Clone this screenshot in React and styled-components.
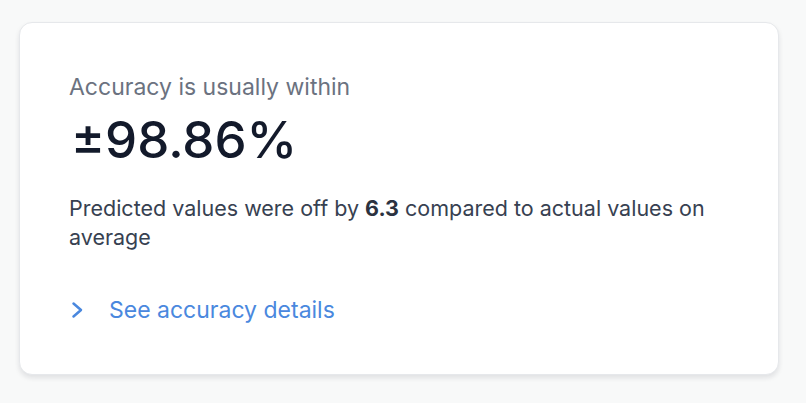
import React from "react"
import styled, { createGlobalStyle } from "styled-components"

const GlobalStyle = createGlobalStyle`
  * {
    box-sizing: border-box;
  }

  html,
  body {
    margin: 0;
    padding: 0;
    background: #f8f9f9;
    font-family: Inter, "Noto Sans", sans-serif;
  }
`

const Page = styled.div`
  width: 806px;
  height: 403px;
  padding: 22px 27px 0 19px;
`

const Card = styled.section`
  width: 760px;
  height: 353px;
  background: #ffffff;
  border: 1px solid #e6e8eb;
  border-radius: 13px;
  box-shadow: 0 3px 5px rgba(17, 24, 39, 0.1);
  padding: 50px 50px 0 49px;
  display: flex;
  flex-direction: column;
`

const Label = styled.p`
  margin: 0;
  font-size: 23px;
  line-height: 28px;
  color: #6b7280;
`

const Value = styled.h1`
  margin: 11px 0 0 2px;
  font-size: 51px;
  line-height: 56px;
  font-weight: 500;
  color: #131a2b;
`

const Summary = styled.p`
  margin: 26px 0 0 0;
  font-size: 21.5px;
  line-height: 29px;
  color: #374151;

  strong {
    font-weight: 700;
    color: #2b3240;
  }
`

const DetailsLink = styled.a`
  margin-top: 44px;
  display: flex;
  align-items: center;
  gap: 24px;
  font-size: 23px;
  line-height: 28px;
  color: #4a88de;
  text-decoration: none;
  cursor: pointer;
`

const Chevron = () => (
  <svg width="16" height="18" viewBox="0 0 16 18" fill="none">
    <path
      d="M4.5 2.5 L12 9 L4.5 15.5"
      stroke="#4a88de"
      strokeWidth="2.5"
      strokeLinecap="round"
      strokeLinejoin="round"
    />
  </svg>
)

const App = () => {
  return (
    <>
      <GlobalStyle />
      <Page>
        <Card>
          <Label>Accuracy is usually within</Label>
          <Value>±98.86%</Value>
          <Summary>
            Predicted values were off by <strong>6.3</strong> compared to
            actual values on average
          </Summary>
          <DetailsLink>
            <Chevron />
            See accuracy details
          </DetailsLink>
        </Card>
      </Page>
    </>
  )
}

export default App
